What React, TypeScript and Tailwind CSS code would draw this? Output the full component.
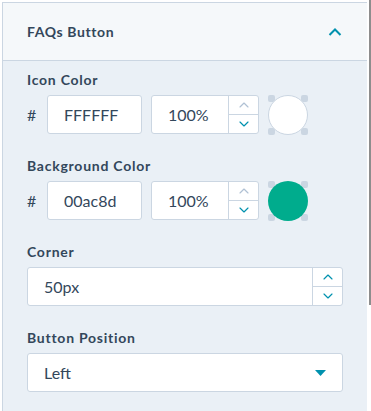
import { ChevronDown, ChevronUp } from "lucide-react";

const font = { fontFamily: "Lato, 'Open Sans', sans-serif" };

function Stepper({ upDisabled = false }: { upDisabled?: boolean }) {
  return (
    <div className="flex w-[30px] flex-col border-l border-[#cbd6e2]">
      <div className="flex flex-1 items-center justify-center border-b border-[#cbd6e2]">
        <ChevronUp
          className={upDisabled ? "h-4 w-4 text-[#b0c1d4]" : "h-4 w-4 text-[#0091ae]"}
          strokeWidth={1.75}
        />
      </div>
      <div className="flex flex-1 items-center justify-center">
        <ChevronDown className="h-4 w-4 text-[#0091ae]" strokeWidth={1.75} />
      </div>
    </div>
  );
}

function Swatch({ color, bordered }: { color: string; bordered?: boolean }) {
  // transparency checker corners peeking out behind the round swatch
  return (
    <div className="relative h-10 w-10 shrink-0">
      <div className="absolute top-0 left-0 h-[7px] w-[7px] rounded-[2px] bg-[#cbd6e2]" />
      <div className="absolute top-0 right-0 h-[7px] w-[7px] rounded-[2px] bg-[#cbd6e2]" />
      <div className="absolute bottom-0 left-0 h-[7px] w-[7px] rounded-[2px] bg-[#cbd6e2]" />
      <div className="absolute right-0 bottom-0 h-[7px] w-[7px] rounded-[2px] bg-[#cbd6e2]" />
      <div
        className={
          "absolute inset-0 rounded-full " + (bordered ? "border border-[#cbd6e2]" : "")
        }
        style={{ backgroundColor: color }}
      />
    </div>
  );
}

function ColorRow({ hex, swatch, bordered }: { hex: string; swatch: string; bordered?: boolean }) {
  return (
    <div className="mt-[5px] flex h-[39px] items-center">
      <span className="w-5 text-base text-[#33475b]">#</span>
      <div className="flex h-[39px] w-[95px] items-center rounded-[3px] border border-[#cbd6e2] bg-white pl-4 text-base text-[#33475b]">
        {hex}
      </div>
      <div className="ml-[9px] flex h-[39px] w-[108px] rounded-[3px] border border-[#cbd6e2] bg-white">
        <div className="flex flex-1 items-center pl-4 text-base text-[#33475b]">100%</div>
        <Stepper upDisabled />
      </div>
      <div className="ml-[9px]">
        <Swatch color={swatch} bordered={bordered} />
      </div>
    </div>
  );
}

const label = "text-sm leading-5 font-bold tracking-[0.75px] text-[#33475b]";

export default function App() {
  return (
    <div className="flex h-[411px] w-[371px] overflow-hidden bg-white pt-[2px] pl-[2px]" style={font}>
      <div className="flex w-[365px] flex-col border-t border-l border-[#cbd6e2]">
        {/* header */}
        <div className="flex h-[58px] items-center justify-between border-b border-[#cbd6e2] bg-[#f5f8fa] px-6">
          <span className="text-sm font-bold tracking-[0.6px] text-[#33475b]">FAQs Button</span>
          <svg width="14" height="8" viewBox="0 0 14 8" className="mr-[1px]">
            <polyline points="1.5,7 7,1.5 12.5,7" fill="none" stroke="#0091ae" strokeWidth="2" />
          </svg>
        </div>

        <div className="flex flex-1 flex-col gap-[22px] bg-[#eaf0f6] px-6 pt-[9px]">
          <div>
            <div className={label}>Icon Color</div>
            <ColorRow hex="FFFFFF" swatch="#ffffff" bordered />
          </div>

          <div>
            <div className={label}>Background Color</div>
            <ColorRow hex="00ac8d" swatch="#00ac8d" />
          </div>

          <div>
            <div className={label}>Corner</div>
            <div className="mt-[5px] flex h-[39px] rounded-[3px] border border-[#cbd6e2] bg-white">
              <div className="flex flex-1 items-center pl-4 text-base text-[#33475b]">50px</div>
              <Stepper />
            </div>
          </div>

          <div>
            <div className={label}>Button Position</div>
            <div className="mt-[5px] flex h-[39px] items-center justify-between rounded-[3px] border border-[#cbd6e2] bg-white pr-4 pl-4 text-base text-[#33475b]">
              <span>Left</span>
              <svg width="11" height="6" viewBox="0 0 11 6">
                <polygon points="0,0 11,0 5.5,6" fill="#0091ae" />
              </svg>
            </div>
          </div>
        </div>
      </div>
      <div className="w-[2px] bg-white" />
      <div className="-mt-[2px] w-[2px]">
        <div className="h-[305px] bg-[#8d8d8d]" />
      </div>
    </div>
  );
}
